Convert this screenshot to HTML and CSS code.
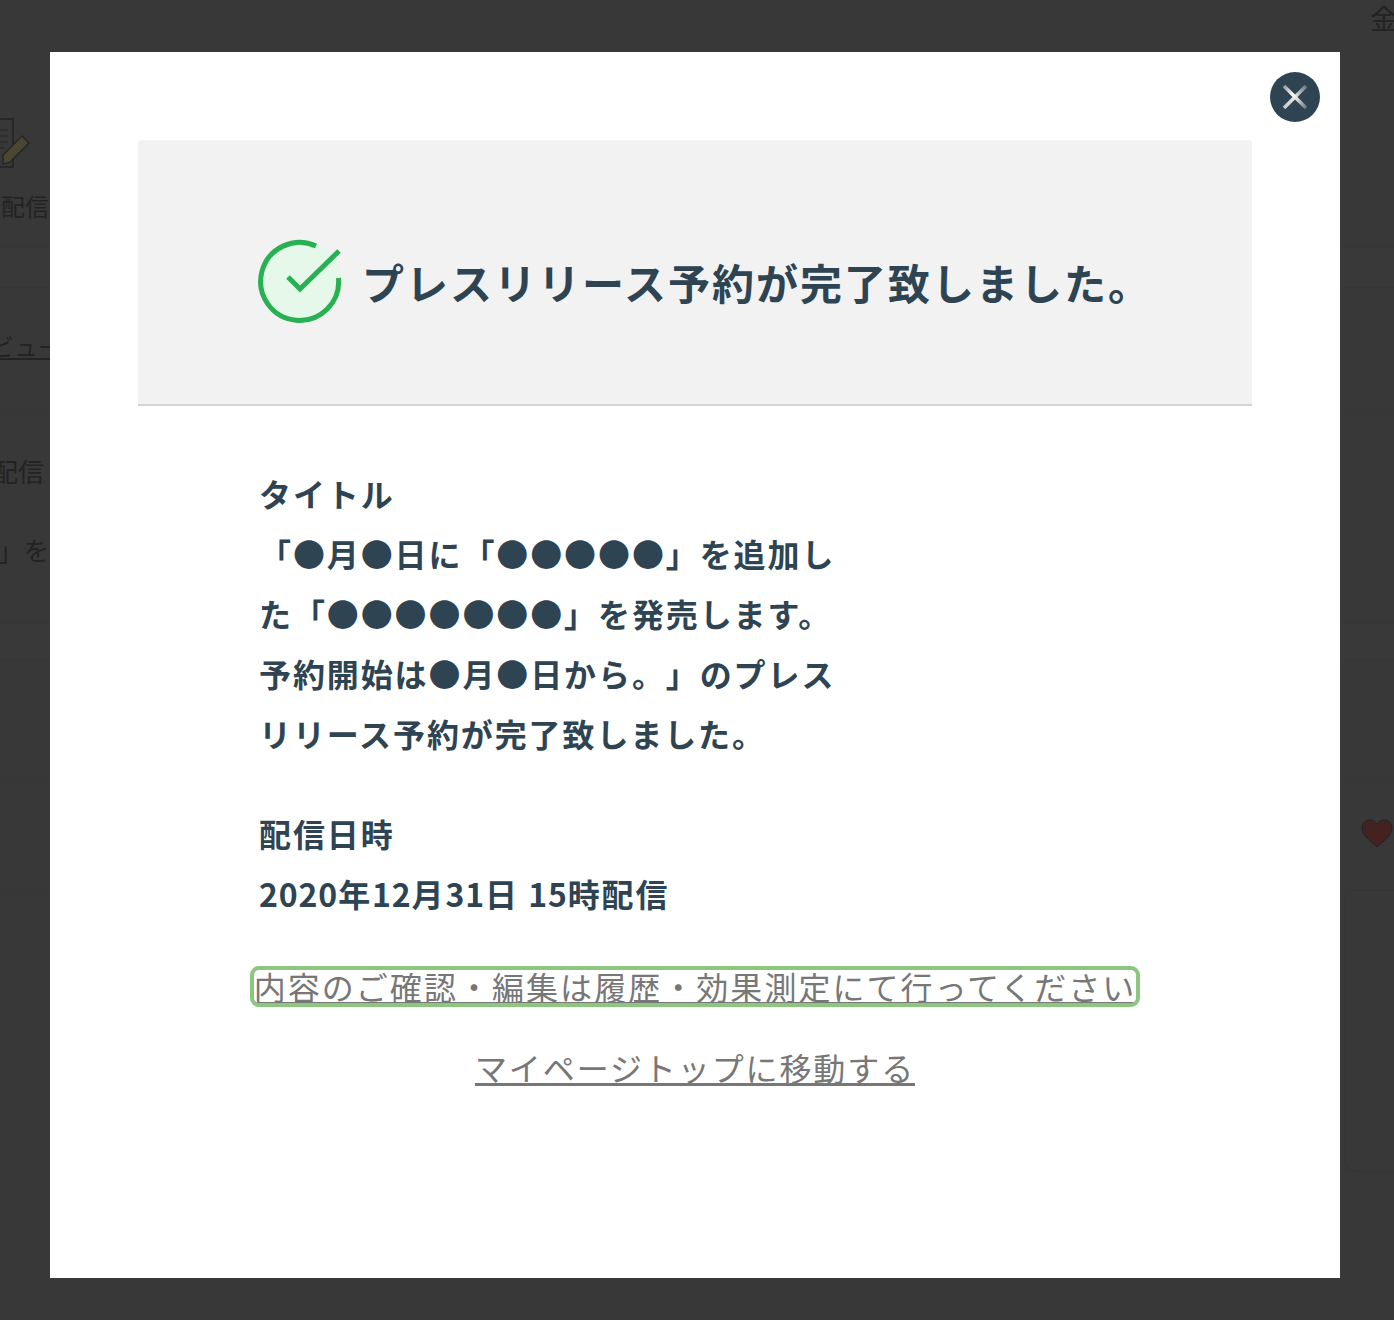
FILE: index.html
```html
<!DOCTYPE html>
<html lang="ja">
<head>
    <meta charset="UTF-8">
    <meta name="viewport" content="width=device-width, initial-scale=1.0">
    <title>プレスリリース予約完了</title>
    <link rel="stylesheet" href="styles.css">
</head>
<body>
    <div class="page">
        <div class="row row-top">
            <div class="top-date">金</div>
            <div class="top-left">
                <svg class="pencil" width="34" height="52" viewBox="0 0 34 52">
                    <path d="M-6 1H13V49H-6" fill="none" stroke="#222" stroke-width="1.5"/>
                    <path d="M-4 12H8M-4 18H8M-4 24H8M-4 30H5" stroke="#2a2a2a" stroke-width="1.5"/>
                    <path d="M22 18L29 25L10 44L3 46L3 37Z" fill="#4a4631" stroke="#222" stroke-width="1.2"/>
                </svg>
                <div class="top-label">予約配信</div>
            </div>
        </div>
        <div class="row row-band"></div>
        <div class="row row-link"><span class="bg-link">レビュー</span></div>
        <div class="row row-text">
            <p class="bg-text bg-text-a">予約配信</p>
            <p class="bg-text bg-text-b">より」を</p>
        </div>
        <div class="row row-gap"></div>
        <div class="row row-plain"></div>
        <div class="row row-heart">
            <svg class="heart" width="32" height="30" viewBox="0 0 32 30">
                <path d="M16 28C10 22 1 17 1 9C1 4 5 1 9 1C12 1 15 3 16 5C17 3 20 1 23 1C27 1 31 4 31 9C31 17 22 22 16 28Z" fill="#452222" stroke="#222" stroke-width="1"/>
            </svg>
        </div>
        <div class="row row-card">
            <div class="bg-card"></div>
        </div>
    </div>

    <div class="overlay">
        <div class="modal">
            <button class="close-btn" aria-label="閉じる">
                <svg width="50" height="50" viewBox="0 0 50 50">
                    <defs>
                        <linearGradient id="closeA" gradientUnits="userSpaceOnUse" x1="14" y1="14" x2="36" y2="36">
                            <stop offset="0" stop-color="#9a9a9a"/>
                            <stop offset="0.4" stop-color="#fff"/>
                            <stop offset="0.6" stop-color="#ddd"/>
                            <stop offset="1" stop-color="#6f7478"/>
                        </linearGradient>
                        <linearGradient id="closeB" gradientUnits="userSpaceOnUse" x1="36" y1="14" x2="14" y2="36">
                            <stop offset="0" stop-color="#6f7478"/>
                            <stop offset="0.5" stop-color="#e8e8e8"/>
                            <stop offset="1" stop-color="#c8c8c8"/>
                        </linearGradient>
                    </defs>
                    <path d="M36 14L14 36" stroke="url(#closeB)" stroke-width="3.500"/>
                    <path d="M14 14L36 36" stroke="url(#closeA)" stroke-width="3.500"/>
                </svg>
            </button>
            <div class="done-panel">
                <svg class="done-icon" width="90" height="90" viewBox="0 0 90 90">
                    <circle cx="45" cy="44.500" r="41" fill="#e6f8ea"/>
                    <path d="M83.500 41A39 39 0 1 1 61 9" fill="none" stroke="#27b152" stroke-width="5"/>
                    <path d="M33 40L45 52L84 14" fill="none" stroke="#27b152" stroke-width="5"/>
                </svg>
                <h1 class="done-title">プレスリリース予約が完了致しました。</h1>
            </div>
            <div class="detail">
                <p class="detail-text">タイトル</p>
                <p class="detail-text">「●月●日に「●●●●●」を追加した「●●●●●●●」を発売します。予約開始は●月●日から。」のプレスリリース予約が完了致しました。</p>
                <p class="detail-text detail-head">配信日時</p>
                <p class="detail-text"><span class="num">2020</span>年<span class="num">12</span>月<span class="num">31</span>日 <span class="num">15</span>時配信</p>
            </div>
            <div class="links">
                <a class="modal-link modal-link-focus" href="#">内容のご確認・編集は履歴・効果測定にて行ってください</a>
                <a class="modal-link" href="#">マイページトップに移動する</a>
            </div>
        </div>
    </div>
</body>
</html>
```

FILE: styles.css
```css
html, body {
    margin: 0;
    height: 1320px;
    overflow: hidden;
    background-color: #373837;
    font-family: "Noto Sans CJK JP", "Noto Sans", sans-serif;
    text-spacing-trim: space-all;
}

/* 背景のページ（暗転） */
.page {
    color: #232323;
}
.row {
    display: flex;
    box-sizing: border-box;
    border-bottom: 1px solid #353635;
}
.row-top {
    height: 248px;
    position: relative;
}
.top-date {
    position: absolute;
    top: 2px;
    left: 1370px;
    font-size: 28px;
    line-height: 32px;
}
.top-left {
    margin-left: -6px;
    padding-top: 118px;
}
.pencil {
    display: block;
    margin-left: 6px;
    overflow: visible;
}
.top-label {
    margin-top: 21px;
    margin-left: -41px;
    font-size: 24px;
    line-height: 30px;
}
.row-band {
    height: 40px;
    background-color: #383938;
}
.row-link {
    height: 122px;
    padding-top: 42px;
}
.bg-link {
    margin-left: -34px;
    font-size: 24px;
    line-height: 32px;
    height: 32px;
    text-decoration: underline;
}
.row-text {
    height: 214px;
    flex-direction: column;
}
.bg-text {
    margin: 0;
    font-size: 26px;
    line-height: 40px;
}
.bg-text-a {
    margin-top: 41px;
    margin-left: -60px;
}
.bg-text-b {
    margin-top: 39px;
    margin-left: -54px;
}
.row-gap {
    height: 36px;
    background-color: #383938;
}
.row-plain {
    height: 120px;
}
.row-heart {
    height: 110px;
    justify-content: flex-end;
    padding-top: 39px;
}
.heart {
    margin-right: 1px;
}
.row-card {
    height: 300px;
    border-bottom: none;
    justify-content: flex-end;
}
.bg-card {
    width: 400px;
    height: 282px;
    margin-right: -350px;
    box-sizing: border-box;
    border: 1px solid #343534;
    border-radius: 12px;
}

/* モーダル */
.overlay {
    position: absolute;
    top: 52px;
    left: 50px;
}
.modal {
    position: relative;
    box-sizing: border-box;
    width: 1290px;
    height: 1226px;
    padding: 88px;
    background-color: white;
}
.close-btn {
    position: absolute;
    top: 20px;
    right: 20px;
    width: 50px;
    height: 50px;
    padding: 0;
    border: none;
    border-radius: 50%;
    background-color: #2e4453;
    cursor: pointer;
}
.close-btn svg {
    display: block;
}
.done-panel {
    display: flex;
    align-items: center;
    gap: 17px;
    box-sizing: border-box;
    height: 266px;
    padding: 20px 0 0 117px;
    background-color: #f2f2f2;
    border-bottom: 2px solid #d4d4d4;
    border-radius: 4px 4px 0 0;
}
.done-title {
    margin: 0;
    color: #2e4453;
    font-size: 42px;
    font-weight: 700;
    letter-spacing: 2px;
    line-height: 60px;
}
.detail {
    width: 590px;
    margin: 57px 0 0 121px;
}
.detail-text {
    margin: 0;
    color: #2e4453;
    font-size: 32px;
    font-weight: 700;
    letter-spacing: 1.9px;
    line-height: 60px;
}
.num {
    letter-spacing: 0.9px;
}
.detail-head {
    margin-top: 40px;
}
.links {
    display: flex;
    flex-direction: column;
    align-items: center;
    gap: 48px;
    margin-top: 47px;
}
.modal-link {
    color: #777;
    font-size: 32px;
    letter-spacing: 1.9px;
    line-height: 33px;
    text-decoration: underline;
}
.modal-link-focus {
    letter-spacing: 2.05px;
    outline: 4px solid #8cc67f;
    border-radius: 5px;
}
```
